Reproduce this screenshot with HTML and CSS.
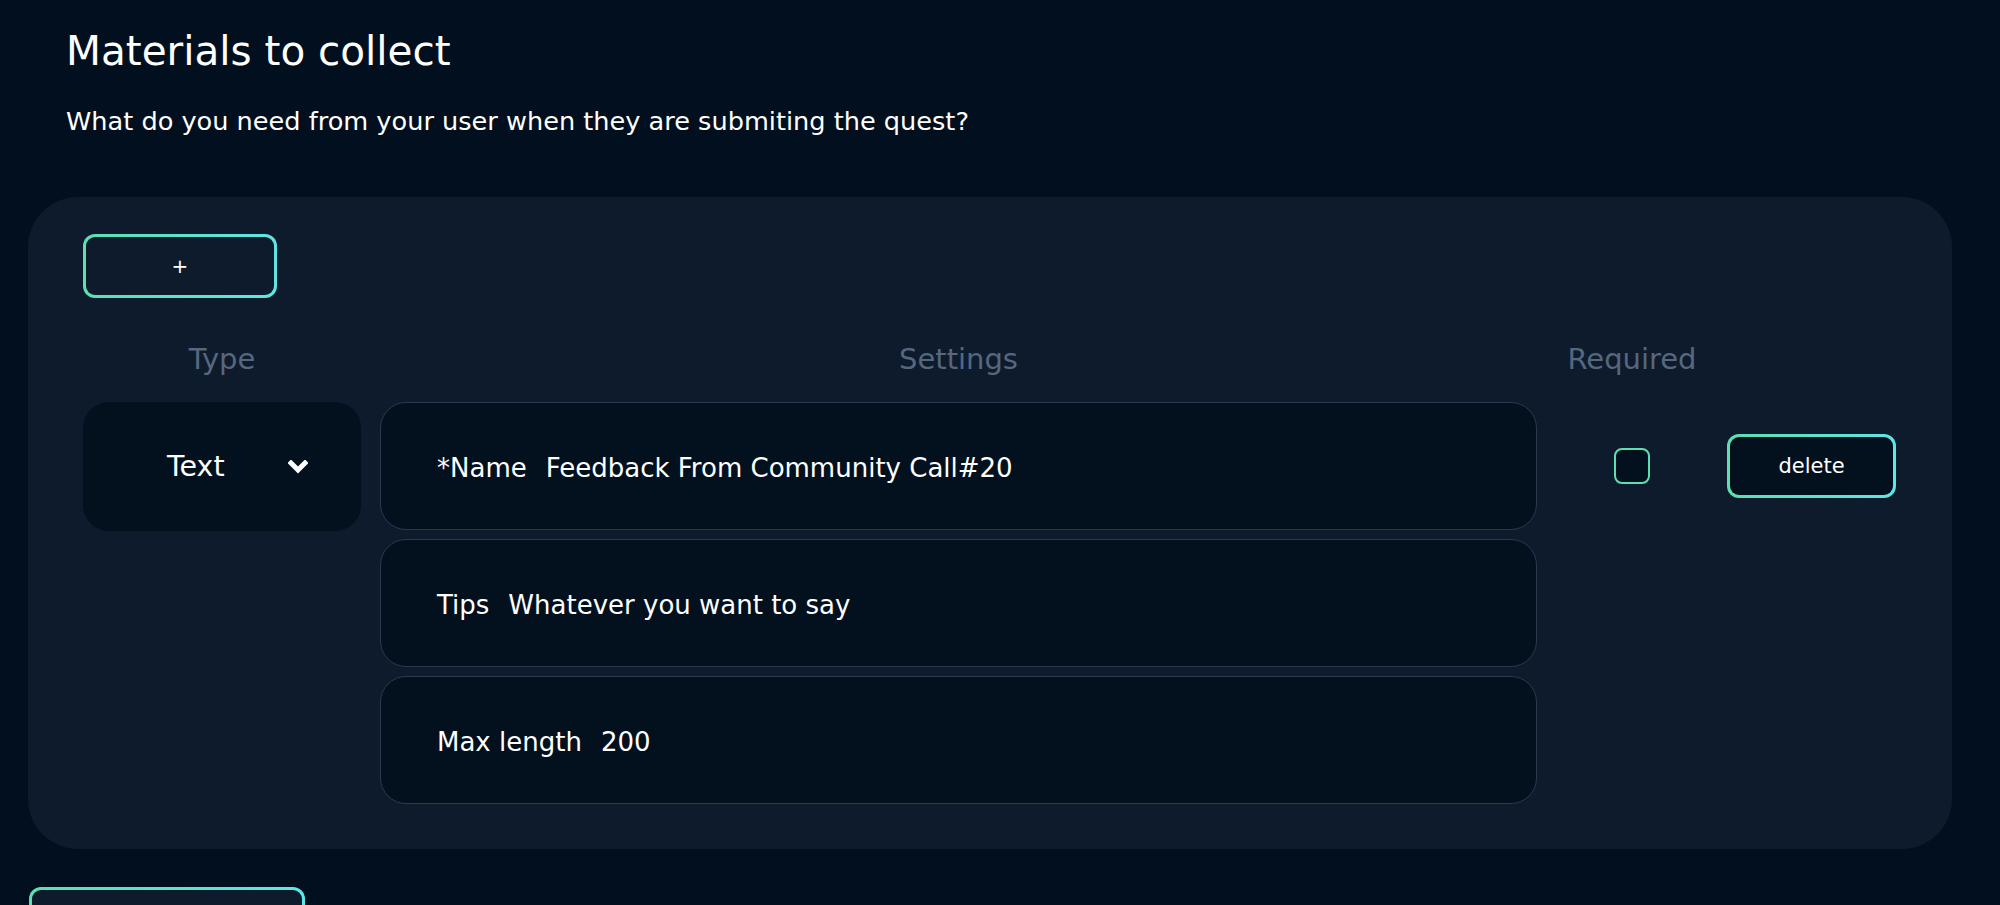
FILE: index.html
```html
<!DOCTYPE html>
<html lang="en">
<head>
<meta charset="utf-8">
<title>Materials to collect</title>
<link rel="stylesheet" href="styles.css">
</head>
<body>
<div class="page">
  <header class="intro">
    <h1 class="title">Materials to collect</h1>
    <p class="subtitle">What do you need from your user when they are submiting the quest?</p>
  </header>

  <section class="panel">
    <button class="grad-btn add-btn" type="button">+</button>

    <div class="grid">
      <div class="col-head">Type</div>
      <div class="col-head">Settings</div>
      <div class="col-head">Required</div>
      <div class="col-head"></div>

      <div class="type-select">
        <span class="type-label">Text</span>
        <svg class="chevron" width="20" height="14" viewBox="0 0 20 14" aria-hidden="true">
          <path d="M3 3 L10 10 L17 3" fill="none" stroke="#ffffff" stroke-width="5" stroke-linecap="square" stroke-linejoin="miter"/>
        </svg>
      </div>

      <div class="settings">
        <div class="field"><span class="field-label">*Name</span><span class="field-value">Feedback From Community Call#20</span></div>
        <div class="field"><span class="field-label">Tips</span><span class="field-value">Whatever you want to say</span></div>
        <div class="field"><span class="field-label">Max length</span><span class="field-value">200</span></div>
      </div>

      <div class="cell-center">
        <span class="checkbox"></span>
      </div>

      <div class="cell-center">
        <button class="grad-btn delete-btn" type="button">delete</button>
      </div>
    </div>
  </section>

  <button class="grad-btn bottom-btn" type="button"></button>
</div>
</body>
</html>
```

FILE: styles.css
```css
* { box-sizing: border-box; }

html, body {
  margin: 0;
  padding: 0;
  background: #020f1e;
  overflow: hidden;
}

body {
  font-family: "DejaVu Sans", "Noto Sans", sans-serif;
  color: #ffffff;
}

.page {
  padding: 0 48px 0 28px;
}

.intro {
  padding: 27px 0 0 38px;
}

.title {
  margin: 0;
  font-size: 40.5px;
  line-height: 48px;
  font-weight: 400;
}

.subtitle {
  margin: 28px 0 0;
  font-size: 25.6px;
  line-height: 36px;
  font-weight: 400;
}

.panel {
  margin-top: 58px;
  background: #0e1b2c;
  border-radius: 50px;
  padding: 37px 56px 45px 55px;
}

.grad-btn {
  border: 3px solid transparent;
  border-radius: 12px;
  color: #ffffff;
  font-family: inherit;
  cursor: pointer;
  padding: 0;
}

.add-btn {
  display: block;
  width: 194px;
  height: 64px;
  font-size: 20px;
  background:
    linear-gradient(#0e1b2c, #0e1b2c) padding-box,
    linear-gradient(90deg, #5ddfb1, #5ee6e6) border-box;
}

.grid {
  margin-top: 39px;
  display: grid;
  grid-template-columns: 278px 1157px 152px 169px;
  column-gap: 19px;
  row-gap: 21px;
  align-items: start;
}

.col-head {
  height: 44px;
  line-height: 44px;
  font-size: 29px;
  color: #56677e;
  text-align: center;
}

.type-select {
  height: 129px;
  border-radius: 26px;
  background: #03111f;
  display: flex;
  align-items: center;
  padding: 0 53px 0 84px;
}

.type-label {
  font-size: 28.5px;
}

.chevron {
  margin-left: auto;
}

.settings {
  display: flex;
  flex-direction: column;
  gap: 9px;
}

.field {
  height: 128px;
  border: 1.5px solid #293950;
  border-radius: 26px;
  background: #03111f;
  display: flex;
  align-items: center;
  gap: 19px;
  padding: 4px 0 0 56px;
  font-size: 26px;
}

.cell-center {
  height: 128px;
  display: flex;
  align-items: center;
  justify-content: center;
}

.checkbox {
  width: 36px;
  height: 36px;
  border: 2px solid #5ddfb1;
  border-radius: 8px;
  background: #03111f;
}

.delete-btn {
  width: 169px;
  height: 64px;
  font-size: 21px;
  background:
    linear-gradient(#03111f, #03111f) padding-box,
    linear-gradient(90deg, #5ddfb1, #5ee6e6) border-box;
}

.bottom-btn {
  display: block;
  margin: 38px 0 0 1px;
  width: 276px;
  height: 64px;
  background:
    linear-gradient(#0e1b2c, #0e1b2c) padding-box,
    linear-gradient(90deg, #5ddfb1, #5ee6e6) border-box;
}
```
